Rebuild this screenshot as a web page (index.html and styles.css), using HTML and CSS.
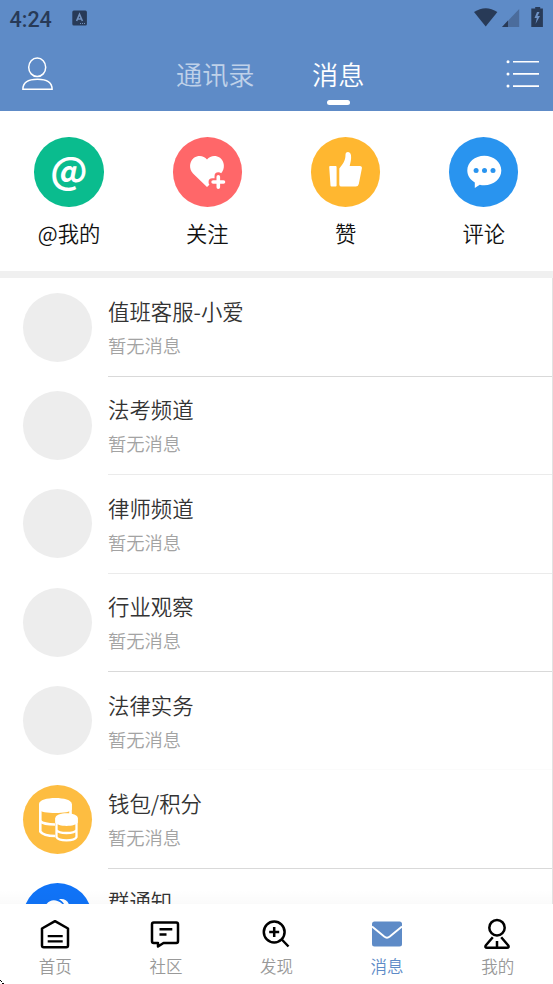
FILE: index.html
```html
<!DOCTYPE html>
<html lang="zh-CN">
<head>
<meta charset="utf-8">
<meta name="viewport" content="width=device-width">
<title>消息</title>
<link rel="stylesheet" href="styles.css">
</head>
<body>
<div class="app">
  <header class="header">
    <div class="status">
      <span class="clock">4:24</span>
      <svg class="ime" width="16" height="16" viewBox="0 0 16 16"><rect x=".3" y=".5" width="14.6" height="15" rx="1.5" fill="#283a57"/><path d="M4.6 11 7.5 4.2 10.4 11M5.6 9h3.8" fill="none" stroke="#7190bd" stroke-width="1.6"/><path d="M8 13.5h6" stroke="#7190bd" stroke-width="1" stroke-dasharray="1 1"/></svg>
      <svg class="signals" width="72" height="22" viewBox="0 0 72 22">
        <path d="M0 5Q11.700-2.600 23.400 5L11.700 19.500Z" fill="#283a57"/>
        <path d="M45.200 2V20H28Z" fill="#4b6c9c"/><path d="M34 13.600V20H28Z" fill="#283a57"/>
        <path d="M58.500 1.500h2.700V0h5v1.500h2.700V20H57.300V1.500Z" fill="#283a57"/><path d="M63 5 60.500 11h2.300L61.500 17 66 9h-2.500L65.500 5Z" fill="#6d91c4"/>
      </svg>
    </div>
    <div class="bar">
      <svg class="user" width="32" height="34" viewBox="0 0 32 34" fill="none" stroke="#fff" stroke-width="1.500"><ellipse cx="15.200" cy="10.300" rx="8.500" ry="9.300"/><path d="M.9 32.200C.9 26 6 22.200 15.500 22.200s14.600 3.800 14.600 10Z"/></svg>
      <nav class="tabs"><span class="tab">通讯录</span><span class="tab active">消息</span></nav>
      <svg class="menu" width="34" height="30" viewBox="0 0 34 30"><g stroke="#fff" stroke-width="1.600"><path d="M7 2.700h26M7 14.900h26M7 27.100h26"/></g><g fill="#fff"><circle cx="2" cy="2.700" r="1.500"/><circle cx="2" cy="14.900" r="1.500"/><circle cx="2" cy="27.100" r="1.500"/></g></svg>
    </div>
  </header>

  <section class="shortcuts">
    <div class="shortcut"><div class="disc green"><span class="at">@</span></div><span>@我的</span></div>
    <div class="shortcut"><div class="disc red">
      <svg width="70" height="70" viewBox="0 0 70 70"><path d="M35 50 21 36.500C16.500 32 17.500 24 22 20.800 26.500 17.800 32 18.700 35 22.500 38 18.700 43.500 17.800 48 20.800 52.500 24 53.500 32 49 36.500Z" fill="#fff"/><path d="M46.300 39v12M40.300 45h12" stroke="#ff6769" stroke-width="7.500" stroke-linecap="round"/><path d="M46.300 39.800v10.400M41.100 45h10.400" stroke="#fff" stroke-width="3.600" stroke-linecap="round"/></svg>
    </div><span>关注</span></div>
    <div class="shortcut"><div class="disc yellow">
      <svg width="70" height="70" viewBox="0 0 70 70" fill="#fff"><path d="M20 29h5.600q1 0 1 1v18.600q0 1-1 1h-4q-1 0-1.100-1L19.200 30q0-1 .8-1ZM29.300 31.500C32.500 27 35.500 24.500 35.500 17.500c.4-3.500 4.800-3.200 5.500.8.500 3.800-.5 7-1.300 10.700h10.200c1.600 0 2.200 1 2 2.300L48.800 47q-.6 2.600-3 2.600H31.500q-2.200 0-2.200-2.200Z"/></svg>
    </div><span>赞</span></div>
    <div class="shortcut"><div class="disc blue">
      <svg width="70" height="70" viewBox="0 0 70 70"><path d="M35.300 18.800c9.500 0 17 6.500 17 14.800s-7.500 14.700-17 14.700q-2.500 0-4.500-.5L25.800 51V45.500C21 42.800 18.300 38.600 18.300 33.600c0-8.300 7.500-14.800 17-14.800Z" fill="#fff"/><g fill="#2994ef"><circle cx="27.100" cy="33.600" r="2.500"/><circle cx="35.500" cy="33.600" r="2.500"/><circle cx="44" cy="33.600" r="2.500"/></g></svg>
    </div><span>评论</span></div>
  </section>

  <main class="list">
    <div class="row"><div class="avatar"></div><div class="info"><h3>值班客服-小爱</h3><p>暂无消息</p></div></div>
    <div class="row soft"><div class="avatar"></div><div class="info"><h3>法考频道</h3><p>暂无消息</p></div></div>
    <div class="row soft"><div class="avatar"></div><div class="info"><h3>律师频道</h3><p>暂无消息</p></div></div>
    <div class="row"><div class="avatar"></div><div class="info"><h3>行业观察</h3><p>暂无消息</p></div></div>
    <div class="row faint"><div class="avatar"></div><div class="info"><h3>法律实务</h3><p>暂无消息</p></div></div>
    <div class="row"><div class="avatar wallet">
      <svg width="69" height="69" viewBox="0 0 69 69"><path d="M17.300 19v27.500c2 3 8 4.500 15 4.500" fill="none" stroke="#fff" stroke-width="2.600"/><path d="M47.500 19v10" stroke="#fff" stroke-width="2.600"/><path d="M16 19c0-8 32.800-8 32.800 0v5.500c-2 4.800-30.800 4.800-32.800 0Z" fill="#fff"/><path d="M17 36c3 2.800 8 3.500 15 3.500" fill="none" stroke="#fff" stroke-width="2.600"/><path d="M33.500 33v19c2 4.500 18 4.500 20 0V33M33.500 45c2 4 18 4 20 0" fill="#fdbd41" stroke="#fff" stroke-width="2.300"/><path d="M32.300 33c0-6.500 22.500-6.500 22.500 0v4.500c-2 4.500-20.500 4.500-22.500 0Z" fill="#fff"/></svg>
    </div><div class="info"><h3>钱包/积分</h3><p>暂无消息</p></div></div>
    <div class="row"><div class="avatar group">
      <svg width="69" height="69" viewBox="0 0 69 69"><path d="M22.500 22.500C27 15.500 34 15.500 41 22.500v8H22.500Z" fill="#fff"/><path d="M36 16.300C41 15 46 18 46.500 24H42C41.500 20.500 39 18 36 16.300Z" fill="#fff"/></svg>
    </div><div class="info"><h3>群通知</h3></div></div>
  </main>

  <nav class="bottom">
    <div class="item"><svg width="32" height="32" viewBox="0 0 32 32" fill="none" stroke="#000" stroke-width="2.500" stroke-linejoin="round"><path d="M3 10.500 16 3.200 29 10.500V27.500q0 1.800-1.800 1.800H4.800Q3 29.300 3 27.500Z"/><path d="M8.700 18.200h15M8.700 23.400h15" stroke-width="2.200"/></svg><span>首页</span></div>
    <div class="item"><svg width="32" height="32" viewBox="0 0 32 32" fill="none" stroke="#000" stroke-width="2.500" stroke-linejoin="round"><path d="M4.700 4.500H27.300q1.700 0 1.700 1.700V23.300q0 1.700-1.700 1.700H14.500L9 28.500V25H4.700Q3 25 3 23.300V6.200Q3 4.500 4.700 4.500Z"/><path d="M10.500 11.300h12.800M10.500 16.500h7" stroke-width="2.400"/></svg><span>社区</span></div>
    <div class="item"><svg width="32" height="32" viewBox="0 0 32 32" fill="none" stroke="#000" stroke-width="2.500"><circle cx="14.200" cy="14" r="10.400"/><path d="M14.200 9v10M9.200 14h10M21.800 21.500l6.700 7"/></svg><span>发现</span></div>
    <div class="item on"><svg width="32" height="32" viewBox="0 0 32 32"><rect x="1" y="3.500" width="30" height="25" rx="2.500" fill="#5e8bc7"/><path d="M1 8.500 13.200 18.600q2.800 2.200 5.600 0L31 8.500" fill="none" stroke="#fff" stroke-width="1.900"/></svg><span>消息</span></div>
    <div class="item"><svg width="32" height="32" viewBox="0 0 32 32" fill="none" stroke="#000" stroke-width="2.500" stroke-linejoin="round"><circle cx="16" cy="9.700" r="7.700"/><path d="M11.800 19.300 4.700 27.500q-1 2.300 1.300 2.300H26q2.300 0 1.300-2.300L20.200 19.300M16 23v6"/></svg><span>我的</span></div>
  </nav>
  <svg class="corner" width="4" height="4" viewBox="0 0 4 4" fill="#000"><path d="M0 0h1v1H0ZM1 1h1v1H1ZM2 3h1v1H2ZM3 3h1v1H3Z"/></svg>
</div>
</body>
</html>
```

FILE: styles.css
```css
* { box-sizing: border-box; }
body { margin: 0; background: #fff; font-family: "Noto Sans CJK SC", sans-serif; font-weight: 350; }
svg { display: block; flex: none; }
.app { position: relative; width: 553px; height: 984px; overflow: hidden; display: flex; flex-direction: column; }
.header { height: 110.7px; flex: none; background: #5e8bc7; }
.status { height: 38px; display: flex; align-items: center; padding: 0 7.5px 1.500px 9.500px; color: #283a57; }
.clock { font: 500 21.500px/24px Roboto, sans-serif; width: 62px; padding-top: 4px; }
.signals { margin-left: auto; }
.bar { height: 72px; display: flex; align-items: center; padding: 0 13px 0 21.500px; }
.tabs { flex: 1; display: flex; padding-left: 122.500px; gap: 57.500px; }
.tab { position: relative; font-size: 26.200px; line-height: 40px; color: #bfd1e9; }
.tab.active { color: #fff; }
.tab.active::after { content: ""; position: absolute; left: 14.500px; top: 45.500px; width: 23px; height: 5px; border-radius: 2.500px; background: #fff; }
.shortcuts { height: 167.300px; flex: none; padding-top: 26.700px; display: grid; grid-template-columns: repeat(4, 1fr); border-bottom: 7px solid #f0f0f0; }
.shortcut { display: flex; flex-direction: column; align-items: center; font-size: 21.300px; line-height: 30px; color: #111; gap: 11px; }
.disc { width: 69.300px; height: 69.300px; border-radius: 50%; display: flex; align-items: center; justify-content: center; margin-left: -.4px; }
.green { background: #0abc8e; }
.red { background: #ff6769; }
.yellow { background: #ffb730; }
.blue { background: #2994ef; }
.at { font: bold 37px/40px "Noto Sans CJK SC", sans-serif; color: #fff; padding-bottom: 9px; }
.list { flex: 1; min-height: 0; overflow: hidden; position: relative; border-right: 1px solid #e2e2e2; padding-top: .5px; }
.list::after { content: ""; position: absolute; left: 0; right: 0; bottom: 0; height: 14px; background: linear-gradient(transparent, rgba(0, 0, 0, .02)); }
.row { height: 98.400px; display: flex; padding-left: 23px; gap: 16px; }
.avatar { width: 69px; height: 69px; margin-top: 14.200px; border-radius: 50%; background: #ededed; flex: none; overflow: hidden; }
.wallet { background: #fdbd41; }
.group { background: #1073f7; }
.info { flex: 1; border-bottom: 1px solid #d9d9d9; padding-top: 16.500px; }
.soft .info { border-color: #ebebeb; }
.faint .info { border-color: #fbfbfb; }
h3, p { margin: 0; font-weight: 350; }
h3 { font-size: 21.400px; line-height: 32px; color: #333; }
p { font-size: 18.300px; line-height: 28px; margin-top: 4px; color: #a3a3a3; }
.bottom { height: 80px; flex: none; background: #fff; display: grid; grid-template-columns: repeat(5, 1fr); padding-top: 14px; }
.item { display: flex; flex-direction: column; align-items: center; font-size: 16.500px; line-height: 24px; color: #999; gap: 3.500px; }
.item svg { margin-left: -1px; }
.item.on { color: #5e8bc7; }
.corner { position: absolute; left: 0; bottom: 0; }
```
